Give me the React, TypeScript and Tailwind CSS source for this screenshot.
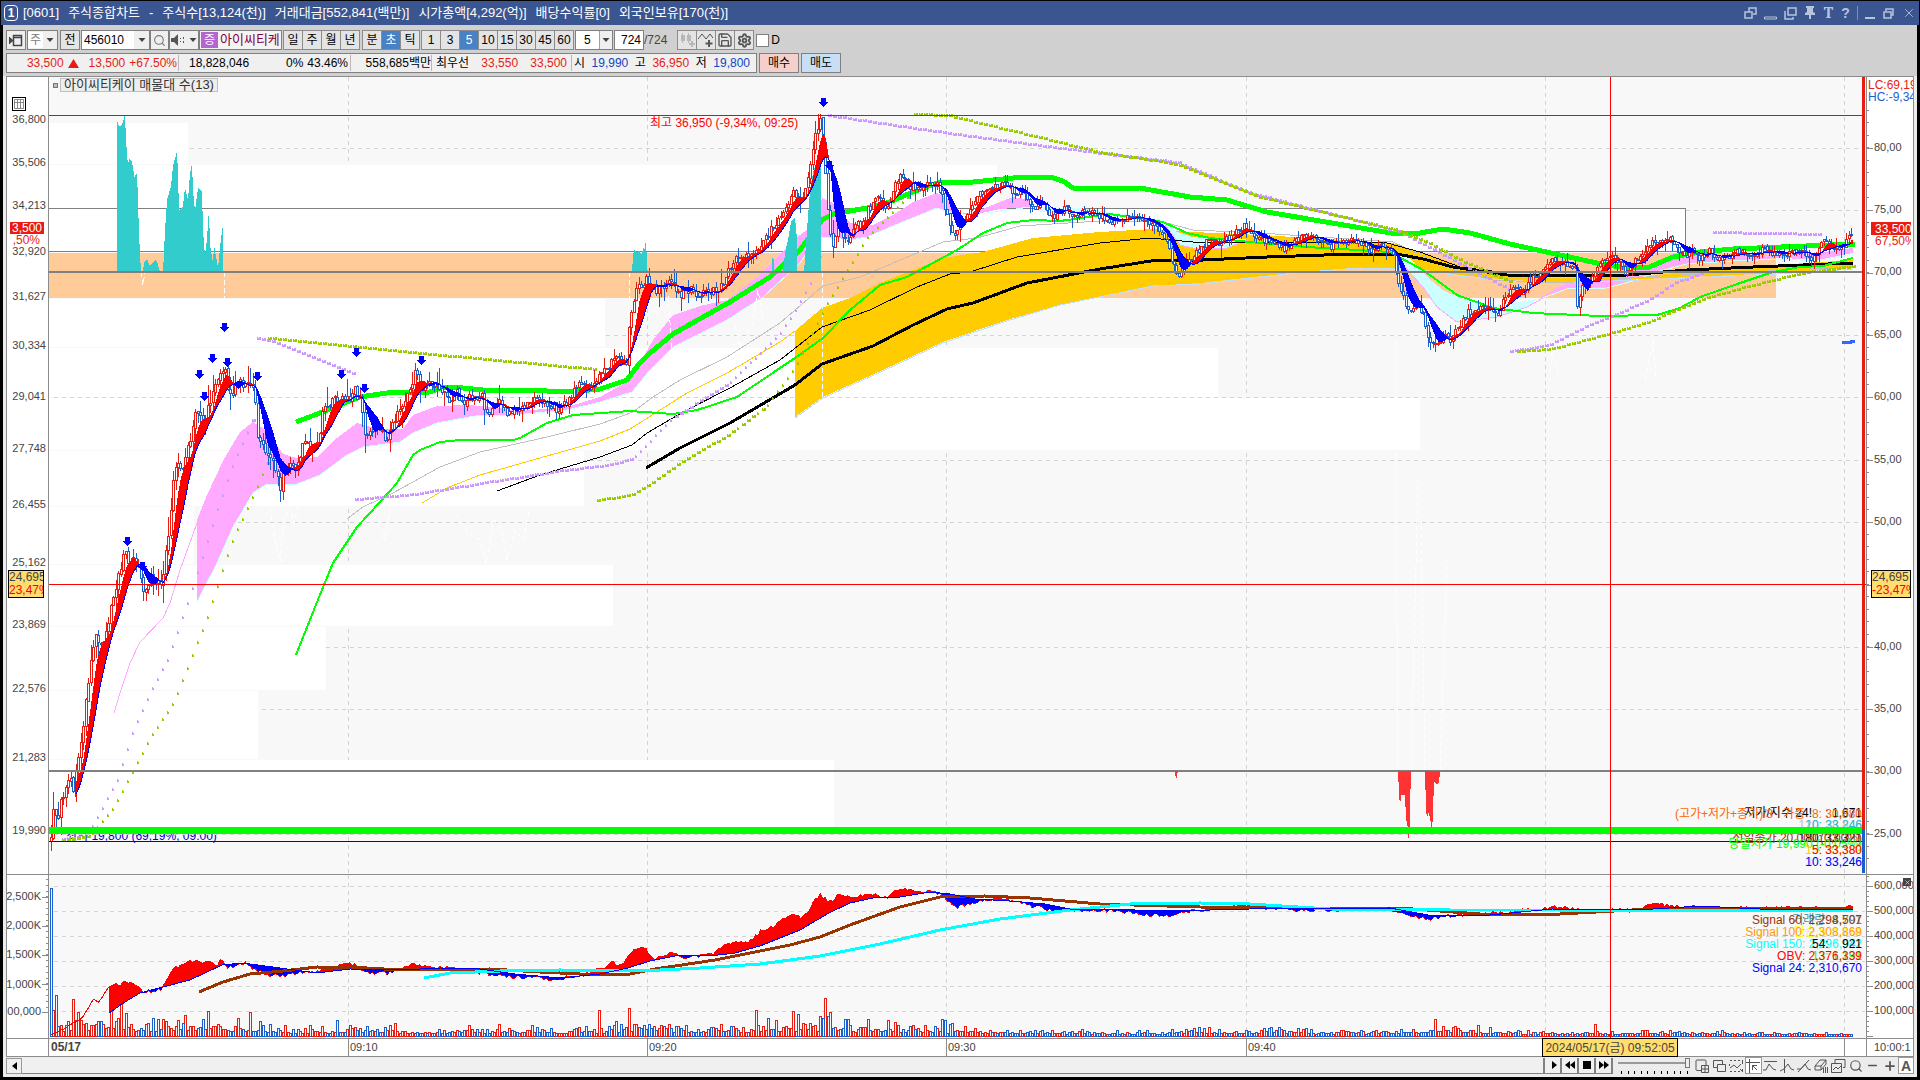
import React from 'react';
import { Minus, Plus, Search, Settings, Save, X } from 'lucide-react';

type Pt = [number, number];

const parse = (s: string): Pt[] => s.trim().split(/\s+/).map((p) => p.split(',').map(Number) as Pt);

const valueAt = (pts: Pt[], x: number) => {
  if (x <= pts[0][0]) return pts[0][1];
  for (let i = 1; i < pts.length; i++) {
    if (x <= pts[i][0]) {
      const [x0, y0] = pts[i - 1];
      const [x1, y1] = pts[i];
      return y0 + ((y1 - y0) * (x - x0)) / (x1 - x0 || 1);
    }
  }
  return pts[pts.length - 1][1];
};

const makeRandom = (seed: number) => () => {
  seed = (seed * 1664525 + 1013904223) % 4294967296;
  return seed / 4294967296;
};

const PRICE = parse(`50,840 52,833 54,802 58,820 62,800 67,780 71,772 73,788 76,768 79,755 82,736 87,693 91,660 95,628 98,640 101,648 104,636 108,618 112,600 115,587
120,570 125,553 128,559 133,561 138,570 143,590 147,581 153,581 163,580 166,545 170,516 173,484 178,458 182,476 185,463 190,438 195,415 200,420 205,427 208,402 213,395
218,384 223,366 225,362 228,391 233,391 238,384 247,384 253,388 256,413 258,445 263,441 267,456 273,463 280,489 283,474 290,463 297,466 302,445 308,438 313,450
318,441 322,413 328,409 335,398 343,398 350,398 355,388 360,398 365,431 372,427 378,422 386,437 393,423 398,410 405,397 410,387 415,371 422,390 428,383 442,390
447,400 457,393 465,403 473,395 482,397 487,415 493,407 502,400 508,413 513,410 523,408 533,400 545,400 557,408 565,403 573,390 580,383 588,388 597,378
607,367 615,358 622,363 627,361 629,325 632,303 637,290 647,279 657,291 670,279 675,287 680,293 690,290 703,293 717,290 725,280 730,267 737,257 750,255 758,248
763,237 770,231 777,220 783,211 793,193 800,200 805,193 810,167 815,138 821,118 824,157 829,223 832,244 838,225 848,245 855,227 863,223 868,210 877,200
885,206 890,206 895,185 902,175 908,186 920,187 927,179 938,183 943,200 950,223 956,241 960,223 970,213 980,193 992,190 1000,183 1013,190 1027,197 1033,210
1043,200 1053,219 1065,207 1074,217 1087,210 1100,216 1118,223 1127,215 1140,220 1153,225 1167,240 1172,263 1179,276 1187,260 1197,252 1207,242 1220,242 1233,235
1244,226 1257,238 1273,240 1283,248 1293,242 1307,235 1320,242 1330,247 1343,240 1360,243 1370,251 1380,245 1393,250 1396,277 1403,297 1410,313 1417,303
1423,313 1428,335 1433,345 1440,340 1447,332 1451,341 1458,327 1467,313 1483,307 1497,314 1503,300 1517,283 1522,294 1533,277 1543,270 1553,261 1560,260 1575,267
1577,305 1582,287 1590,280 1600,263 1610,257 1622,262 1625,272 1633,260 1643,253 1653,240 1660,243 1667,238 1677,245 1684,258 1692,250 1700,257 1710,251 1716,261
1727,257 1737,250 1750,258 1763,249 1782,255 1797,250 1812,258 1823,242 1838,248 1847,240 1853,230`);

const STEP = 2.49;

// one entry for each five-second bar, in plot units
const buildCandles = () => {
  const rand = makeRandom(724);
  const out: { x: number; open: number; close: number; high: number; low: number }[] = [];
  let open = 841;
  for (let i = 0; i < 724; i++) {
    const x = 51 + i * STEP;
    const size = x < 420 ? 12 : x < 1000 ? 9 : 7;
    const close = valueAt(PRICE, x) + (rand() - 0.5) * size;
    out.push({
      x,
      open,
      close,
      high: Math.min(open, close) - rand() * rand() * size * 1.8,
      low: Math.max(open, close) + rand() * rand() * size * 1.8,
    });
    open = close + (rand() - 0.5) * 2;
  }
  return out;
};

const CANDLES = buildCandles();

const candlePath = (up: boolean) =>
  CANDLES.filter((c) => (up ? c.close <= c.open : c.close > c.open))
    .map((c) => {
      const x = Math.round(c.x) + 0.5;
      const top = Math.round(Math.min(c.open, c.close)) + 0.5;
      const h = Math.max(1, Math.round(Math.abs(c.open - c.close)));
      return `M${x} ${Math.round(c.high)}V${top}M${x} ${top + h}V${Math.round(c.low) + 1}M${x - 1} ${top}h2v${h}h-2z`;
    })
    .join('');

const average = (n: number): Pt[] =>
  CANDLES.map((c, i) => {
    const part = CANDLES.slice(Math.max(0, i - n + 1), i + 1);
    return [c.x, part.reduce((a, b) => a + b.close, 0) / part.length] as Pt;
  });

const MA5 = average(5);
const MA10 = average(10);

// area between two lines, only where the first lies over (or under) the second
const between = (a: Pt[], b: Pt[], over: boolean, from: number, to: number) => {
  let d = '';
  for (let x = from; x < to; x++) {
    const ya = valueAt(a, x);
    const yb = valueAt(b, x);
    if (over ? ya < yb : ya > yb) d += `M${x + 0.5} ${ya.toFixed(1)}V${yb.toFixed(1)}`;
  }
  return d;
};

const markers = (s: string) => {
  const pts = parse(s);
  let d = '';
  for (let x = pts[0][0]; x <= pts[pts.length - 1][0]; x += 5) {
    const y = Math.round(valueAt(pts, x));
    const steep = Math.abs(valueAt(pts, x + 5) - y) > 4;
    d += steep ? `M${x} ${y}h2v2h-2zM${x} ${y - 1}h1v1h-1z` : `M${x} ${y}h4v2h-4zM${x} ${y - 1}h1v1h-1zM${x + 2} ${y - 1}h2v1h-2z`;
  }
  return d;
};

const line = (pts: Pt[]) => pts.map((p) => `${p[0].toFixed(1)},${p[1].toFixed(1)}`).join(' ');

const BANDS: { y: number; h: number; to: number }[] = [
  { y: 123, h: 41, to: 188 },
  { y: 165, h: 43, to: 997 },
  { y: 299, h: 48, to: 605 },
  { y: 348, h: 49, to: 1218 },
  { y: 398, h: 52, to: 1420 },
  { y: 451, h: 55, to: 584 },
  { y: 507, h: 57, to: 194 },
  { y: 565, h: 61, to: 613 },
  { y: 627, h: 63, to: 326 },
  { y: 691, h: 68, to: 258 },
  { y: 760, h: 73, to: 834 },
];

const GRID_X = [348, 647, 946, 1246, 1545, 1844];
const GRID_Y = [148, 210, 335, 397, 460, 522, 584, 647, 709, 834];

const TEAL = [
  '117,272 117,121 119,126 122,125 124,119 124,113 125,116 126,140 128,167 129,158 132,162 134,174 134,178 137,173 138,200 139,234 141,272',
  '143,272 144,263 147,259 150,266 155,260 157,261 160,272',
  '163,272 165,231 167,200 171,186 173,166 177,151 178,174 179,211 183,206 185,188 188,200 190,174 192,163 193,191 195,211 198,188 202,191 203,230 205,257 207,238 209,209 210,245 213,263 214,245 218,268 221,238 223,225 223,272',
  '632,272 633,257 634,249 637,253 639,250 642,255 643,247 645,250 646,236 647,267 648,272',
  '772,272 773,245 774,272',
  '783,272 785,253 788,240 791,222 793,219 795,217 797,240 797,272',
  '804,272 807,230 810,190 813,173 818,157 821,150 821,272',
];

const RED_DROPS = [
  '1398,771 1399,792 1400,807 1401,795 1405,795 1406,818 1408,828 1409,848 1410,808 1411,771',
  '1425,771 1426,807 1427,820 1428,812 1430,817 1432,834 1433,810 1434,782 1437,784 1439,783 1440,771',
  '1175,771 1176,780 1177,776 1178,771',
];

const PINK = [
  `197,520 207,495 223,461 240,432 253,422 267,431 283,454 300,459 317,457 333,441 357,423 377,429 403,429 413,415 437,406 467,405 493,407 520,411 567,407 600,397 627,382
  640,363 653,340 673,315 700,306 727,300 757,277 797,237 817,223 822,198 833,203 850,223 873,225 893,215 913,202 937,193 947,198 960,213 973,213 1000,202 1013,197 1030,200
  1030,207 1000,209 973,215 953,213 937,208 900,223 867,237 850,240 822,237 813,243 800,263 763,297 727,320 673,347 650,370 632,392 600,402 567,410 513,415 480,415 437,423 413,433
  400,442 363,447 347,455 320,475 297,484 267,484 253,493 233,527 217,563 197,602`,
  `1540,297 1567,283 1610,278 1643,268 1673,254 1700,254 1733,255 1783,255 1817,253 1853,248 1853,253 1817,260 1783,258 1733,260 1687,263 1660,270 1633,280 1607,287 1567,288 1540,298`,
];
const PINK_EDGES = [
  '1030,207 973,215 953,213 937,208 900,223 867,237 850,240 822,237 813,243 800,263 763,297 727,320 673,347 650,370 632,392 600,402 567,410 513,415 480,415 437,423 413,433 400,442 363,447 347,455 320,475 297,484 267,484 253,493 233,527 217,563 197,602',
  '1853,254 1817,261 1783,259 1733,261 1687,264 1660,271 1633,281 1607,288 1567,289 1540,299',
];
const ICE = [
  '1040,207 1080,208 1110,212 1163,220 1177,232 1193,237 1220,240 1247,239 1227,248 1193,248 1180,245 1165,225 1110,216 1040,212',
  '1393,250 1410,258 1427,277 1443,290 1460,298 1493,305 1520,302 1537,299 1527,307 1497,317 1457,322 1437,307 1423,287 1410,273 1397,257',
];
const GOLD = `795,331 822,308 850,298 880,283 943,258 983,252 1033,238 1100,232 1153,229 1193,232 1260,235 1393,243 1427,255 1460,265 1493,273 1540,278 1643,277 1700,270 1853,260
1853,268 1777,273 1667,278 1560,282 1510,280 1460,275 1413,268 1360,268 1293,273 1253,277 1200,283 1153,286 1060,305 1007,320 943,342 883,370 823,397 795,417`;
const GOLD_EDGE = '1853,269 1777,274 1667,279 1560,283 1510,281 1460,276 1413,269 1360,268 1293,273 1253,278 1200,284 1153,286 1060,305 1007,321 943,343 883,371 823,398 795,418';

const AVERAGES: { color: string; width: number; pts: string }[] = [
  { color: '#ffaaff', width: 1, pts: '114,713 120,693 130,663 140,642 163,618 170,603 180,570 197,523' },
  {
    color: '#c0c0c0',
    width: 1,
    pts: '347,519 363,507 393,493 440,467 480,452 547,437 600,424 633,412 653,397 680,380 727,357 780,323 823,286 860,277 943,242 977,238 1020,226 1100,221 1163,222 1193,230 1260,233 1393,242 1453,270 1493,280 1560,283 1660,276 1853,267',
  },
  { color: '#ffcc00', width: 1, pts: '422,503 447,488 480,475 547,456 600,441 630,429 657,412 687,393 727,373 780,342 795,331' },
  {
    color: '#000000',
    width: 1,
    pts: '497,491 540,475 600,457 632,445 647,433 683,412 730,388 780,360 822,327 870,310 917,287 950,274 970,272 1017,257 1100,243 1150,238 1193,242 1387,243 1420,252 1460,267 1500,272',
  },
  {
    color: '#000000',
    width: 3,
    pts: '646,468 680,448 730,423 795,385 822,364 873,346 913,325 947,309 973,303 1027,283 1100,269 1157,260 1203,260 1267,257 1353,254 1397,254 1423,259 1453,267 1507,275 1560,276 1627,275 1687,270 1753,267 1853,263',
  },
  {
    color: '#00ff00',
    width: 2,
    pts: '296,655 317,602 333,563 357,527 380,502 397,483 413,455 420,450 440,442 460,440 513,440 520,438 547,423 573,415 630,411 673,414 697,410 737,397 780,368 795,358 823,338 850,310 880,285 907,277 957,250 983,233 1007,223 1033,220 1060,221 1110,214 1163,222 1187,233 1210,238 1260,243 1307,247 1390,252 1423,270 1457,295 1493,308 1533,313 1600,316 1657,315 1680,308 1700,297 1740,283 1773,272 1800,267 1823,266 1853,258',
  },
  {
    color: '#00ff00',
    width: 5,
    pts: '296,422 320,413 347,402 360,397 387,393 430,392 443,387 463,388 493,391 527,390 567,392 600,389 627,380 638,365 650,353 673,334 703,317 730,302 770,277 800,250 822,220 833,214 867,208 887,203 913,192 937,183 973,182 1023,177 1050,177 1063,181 1073,188 1100,189 1140,188 1190,197 1227,200 1267,212 1320,221 1373,230 1397,234 1420,233 1443,229 1470,233 1510,244 1560,255 1597,263 1620,267 1647,268 1673,257 1700,252 1733,249 1855,244',
  },
];

const PURPLE_DOTS = [
  '62,839 88,836 92,826 117,780 133,730 150,692 168,658 187,603 200,563 217,509 233,463 253,418',
  '257,338 273,341 355,374',
  '355,499 413,494 493,481 563,470 613,464 633,458 673,417 730,382 780,333 795,310 813,277 823,247',
  '828,115 913,128 1000,140 1100,153 1177,162 1247,192 1400,232 1453,260 1510,290',
  '1510,351 1547,345 1583,327 1610,316 1647,300 1673,283 1700,273',
  '1713,232 1820,234',
];
const OLIVE_DOTS = [
  '62,840 90,836 97,827 113,808 133,770 150,737 173,703 190,660 207,617 223,567 233,538 253,495 267,463',
  '268,338 420,353 595,369',
  '597,500 630,495 647,485 680,462 730,433 767,405 795,367 827,303 847,270 867,237 907,197',
  '914,114 947,115 1100,152 1177,164 1260,197 1397,230 1427,242 1460,260 1513,283',
  '1517,351 1550,349 1610,333 1650,321 1667,313 1707,297 1747,286 1800,273 1853,266',
];

const GHOSTS = [
  '141,272 143,285 145,272', '224,272 224,298', '270,507 275,540 280,562 284,520 290,507 294,524 298,507',
  '370,507 378,522 385,540 390,507', '452,507 466,530 480,540 486,564 494,520 502,530 507,560 515,530 523,540 530,507',
  '630,272 628,330', '650,300 657,315 668,295 672,350', '735,325 740,348 752,325 758,290 764,325', '822,272 822,397',
  '1395,340 1398,771', '1411,771 1418,480', '1425,771 1421,520', '1440,771 1447,560', '1550,380 1552,352 1558,375', '1645,380 1653,340 1656,378',
];

const ARROWS = parse('127,541 142,566 199,374 204,396 212,358 224,327 227,362 257,376 341,374 356,352 364,388 421,360 823,102 829,165');

const PricePlot: React.FC = () => (
  <svg viewBox="49 77 1817 797" preserveAspectRatio="none" shapeRendering="crispEdges" className="absolute inset-0 h-full w-full" aria-hidden="true">
    <g stroke="#d3d3d3" strokeDasharray="4 4">
      {GRID_X.map((x) => <line key={x} x1={x + 0.5} x2={x + 0.5} y1="77" y2="874" />)}
      {GRID_Y.map((y) => <line key={y} x1="54" x2="1862" y1={y + 0.5} y2={y + 0.5} />)}
    </g>
    {BANDS.map((b) => <rect key={b.y} x="49" y={b.y} width={b.to - 49} height={b.h} fill="#fff" />)}
    <rect x="48.5" y="208.5" width="1637" height="43" fill="#fff" stroke="#808080" />
    <rect x="49" y="253" width="1727" height="45" fill="#ffcc99" />
    <line x1="54" x2="1420" y1="397.5" y2="397.5" stroke="#d3d3d3" strokeDasharray="4 4" />

    {PINK.map((p) => <polygon key={p} points={p} fill="#ffaaff" />)}
    <g fill="none" stroke="#ccffff">
      {PINK_EDGES.map((p) => <polyline key={p} points={p} />)}
    </g>
    <polygon points={GOLD} fill="#ffcc00" />
    <polyline points={GOLD_EDGE} fill="none" stroke="#c0e0ff" />
    {ICE.map((p) => <polygon key={p} points={p} fill="#ccffff" />)}
    <polyline points="1397,257 1410,273 1423,287 1437,307 1457,322 1497,317 1527,307 1543,298" fill="none" stroke="#ffaaff" />
    <polyline points="1165,225 1180,245 1193,248 1227,248 1247,240" fill="none" stroke="#ffaaff" />
    {GHOSTS.map((p) => <polyline key={p} points={p} fill="none" stroke="#fff" strokeDasharray="5 3" />)}

    {AVERAGES.map((a) => (
      <polyline key={a.pts} points={a.pts} fill="none" stroke={a.color} strokeWidth={a.width} strokeLinejoin="round" />
    ))}
    {PURPLE_DOTS.map((p) => <path key={p} d={markers(p)} fill="#cc99ff" />)}
    {OLIVE_DOTS.map((p) => <path key={p} d={markers(p)} fill="#99cc00" />)}
    {TEAL.map((p) => <polygon key={p} points={p} fill="#33cccc" />)}

    <path d={candlePath(true)} fill="#fff" stroke="#e81c10" />
    <path d={candlePath(false)} fill="#fff" stroke="#1a5fcc" />
    <path d={between(MA5, MA10, true, 75, 1853)} stroke="#ff0000" />
    <path d={between(MA5, MA10, false, 75, 1853)} stroke="#0000ff" />
    <polyline points={line(MA10.slice(10))} fill="none" stroke="#0000ff" />

    <rect x="49" y="271" width="1813" height="2" fill="#808080" />
    <rect x="49" y="770" width="1813" height="2" fill="#808080" />
    {RED_DROPS.map((p) => <polygon key={p} points={p} fill="#ff3333" />)}
    <path d="M1842 341h8v-1h5v3h-3v1h-10z" fill="#3366ff" />
    {ARROWS.map(([x, y]) => (
      <path key={`${x}-${y}`} d={`M${x - 2} ${y - 4}h5v4h2l-4.500 5l-4.500 -5h2z`} fill="#0000ff" />
    ))}
    <rect x="49" y="115" width="1813" height="1" fill="#ff0000" />
    <rect x="49" y="841" width="1813" height="1" fill="#0000cc" />
    <rect x="1862" y="77" width="3" height="752" fill="#e81c10" />
    <rect x="1862" y="829" width="3" height="44" fill="#1a5fcc" />
  </svg>
);

const OBV_BASE = parse(`52,1035 67,1027 83,1017 94,998 98,1003 108,988 115,982 119,987 125,981 130,983 137,987 143,992 162,989 167,980 172,970 177,967 187,962 197,960 202,965 210,961 217,965
222,958 227,967 245,963 257,970 267,974 279,976 293,973 310,972 333,967 354,964 365,973 387,973 400,969 414,964 427,967 467,970 489,974 507,976 529,977 556,979 579,976 596,971
612,963 623,966 630,953 637,947 646,949 654,960 670,953 686,958 712,954 733,941 744,943 753,940 761,931 773,926 795,913 800,918 806,914 820,894 829,903 840,893 849,897
873,894 887,897 900,889 922,891 940,894 955,907 971,903 998,897 1021,903 1034,907 1056,910 1100,910 1169,916 1190,911 1245,906 1300,910 1390,909 1397,913 1409,916
1428,919 1452,915 1504,913 1552,907 1587,911 1638,910 1654,903 1676,907 1724,909 1793,908 1841,908 1853,904`);
const OBV_SIGNAL = parse(`109,1013 125,1002 140,993 163,987 190,980 222,965 243,963 280,968 317,973 350,969 400,970 440,968 480,969 515,974 560,978 600,974 628,968 650,961 680,955 710,956 735,953
760,946 800,930 829,913 850,903 873,898 900,897 930,892 950,894 975,899 1010,901 1045,904 1070,909 1100,909 1170,911 1250,909 1390,908 1428,915 1480,916 1552,909
1638,910 1700,906 1760,909 1853,909`);
const VOLUME_SHAPE = parse(`54,20 70,22 95,26 119,24 140,15 170,20 225,20 260,14 300,9 320,10 355,16 400,9 460,10 600,10 635,20 700,12 730,16 824,20 850,16 945,12 1000,8 1100,6 1160,5
1175,10 1380,5 1430,12 1500,6 1620,4 1640,6 1700,4 1853,3`);
const SPIKES: Record<number, number> = { 1: 25, 2: 40, 9: 36, 28: 34, 80: 23, 220: 25, 232: 27, 283: 25, 298: 24, 311: 37, 313: 23, 358: 16, 556: 16, 620: 11 };

const obvSeries = () => {
  const rand = makeRandom(31);
  return CANDLES.map((c) => [c.x, valueAt(OBV_BASE, c.x) + (rand() - 0.5) * (c.x < 110 ? 1 : 4)] as Pt);
};
const OBV = obvSeries();

const volumePath = (up: boolean) => {
  const rand = makeRandom(99);
  let d = '';
  CANDLES.forEach((c, i) => {
    const h = Math.round(SPIKES[i] ?? valueAt(VOLUME_SHAPE, c.x) * (0.2 + rand() * rand() * 1.1)) + 1;
    const isUp = i > 0 && (c.close <= c.open || SPIKES[i] !== undefined);
    if (isUp === up) d += `M${Math.round(c.x) - 0.5} 1036.500h2v${i === 0 ? -148 : -h}h-2z`;
  });
  return d;
};

const ObvPlot: React.FC = () => (
  <svg viewBox="49 875 1817 163" preserveAspectRatio="none" shapeRendering="crispEdges" className="absolute inset-0 h-full w-full" aria-hidden="true">
    <g stroke="#d3d3d3" strokeDasharray="4 4">
      {GRID_X.map((x) => <line key={x} x1={x + 0.5} x2={x + 0.5} y1="875" y2="1038" />)}
      {[886, 911, 936, 961, 986, 1011].map((y) => <line key={y} x1="54" x2="1865" y1={y + 0.5} y2={y + 0.5} />)}
    </g>
    <path d={volumePath(true)} fill="#f8f8f8" stroke="#e81c10" />
    <path d={volumePath(false)} fill="#f8f8f8" stroke="#1a5fcc" />
    <polyline points={line(OBV)} fill="none" stroke="#ff0000" />
    <path d={between(OBV, OBV_SIGNAL, true, 109, 1853)} stroke="#ff0000" />
    <path d={between(OBV, OBV_SIGNAL, false, 109, 1853)} stroke="#0000ff" />
    <polyline
      points="199,992 223,982 250,974 283,971 317,967 367,968 400,970 490,969 540,972 600,975 630,974 655,969 715,960 790,945 820,937 850,925 900,907 940,897 985,896 1030,898 1100,904 1200,907 1300,908 1400,908 1480,914 1560,914 1650,909 1853,908"
      fill="none" stroke="#993300" strokeWidth="3"
    />
    <polyline
      points="424,978 450,973 500,971 560,970 640,971 700,968 760,964 820,956 880,944 940,930 1000,919 1070,910 1130,904 1200,903 1250,904 1330,909 1450,910 1560,910 1853,911"
      fill="none" stroke="#00ffff" strokeWidth="3"
    />
    <polyline points={line(OBV_SIGNAL)} fill="none" stroke="#0000ff" />
  </svg>
);

const top = (y: number, from: number, height: number) => ({ top: `${((y - from) / height) * 100}%` });
const left = (x: number) => ({ left: `${((x - 49) / 1817) * 100}%` });

const LEFT_PRICES: [string, number][] = [
  ['36,800', 119], ['35,506', 162], ['34,213', 205], ['32,920', 251], ['31,627', 296], ['30,334', 345], ['29,041', 396],
  ['27,748', 448], ['26,455', 504], ['25,162', 562], ['23,869', 624], ['22,576', 688], ['21,283', 757], ['19,990', 830],
];
const RIGHT_PRICES: [string, number][] = [
  ['80,00', 147], ['75,00', 209], ['70,00', 271], ['65,00', 334], ['60,00', 396], ['55,00', 459],
  ['50,00', 521], ['40,00', 646], ['35,00', 708], ['30,00', 770], ['25,00', 833],
];

const SUMMARY: { text: string; y: number; className: string }[] = [
  { text: '저가/지수 24!    : 1,671', y: 813, className: 'text-black' },
  { text: '(고가+저가+종가)/3   가중  8: 30,880', y: 814, className: 'text-[#ff6600]' },
  { text: '120: 28,846', y: 825, className: 'text-[#c0c0c0]' },
  { text: '10: 33,246', y: 825, className: 'text-[#22bbdd]' },
  { text: '180: 33,321', y: 838, className: 'text-black' },
  { text: '전일종가 20,000 (0,00%)', y: 838, className: 'text-[#993300]' },
  { text: '당일시가 19,990 (-0,05%)', y: 844, className: 'text-[#00ff00]' },
  { text: '15: 33,380', y: 850, className: 'text-[#ffcc00]' },
  { text: '5: 33,380', y: 850, className: 'text-[#ff0000]' },
  { text: '30: 33,246', y: 862, className: 'text-[#c0e0ff]' },
  { text: '10: 33,246', y: 862, className: 'text-[#0000ff]' },
];

const OBV_SUMMARY: { text: string; y: number; className: string }[] = [
  { text: '거래량: 4,791', y: 920, className: 'text-[#339999]' },
  { text: 'Signal 60: 2,298,507', y: 920, className: 'text-[#993300]' },
  { text: '단순 5: 1,114', y: 932, className: 'text-[#ffff00]' },
  { text: 'Signal 100: 2,308,869', y: 932, className: 'text-[#ff9900]' },
  { text: 'Signal 150: 2,296,942', y: 944, className: 'text-[#00ffff]' },
  { text: '54:    921', y: 944, className: 'text-black' },
  { text: '13: 1,191', y: 956, className: 'text-[#00ff00]' },
  { text: 'OBV: 2,376,339', y: 956, className: 'text-[#ff0000]' },
  { text: 'Signal 24: 2,310,670', y: 968, className: 'text-[#0000ff]' },
];

const TIMES: [string, number][] = [['09:10', 348], ['09:20', 647], ['09:30', 946], ['09:40', 1246], ['', 1844]];

const Arrow: React.FC = () => (
  <svg viewBox="0 0 7 4" className="h-1 w-2" aria-hidden="true"><path d="M0 0h7L3.500 4z" fill="#444" /></svg>
);

const box = 'flex h-5 shrink-0 items-center justify-center border border-[#808080]';
const key = 'flex h-5 shrink-0 items-center justify-center border border-[#8c8c8c] bg-[#e4e4e4] -mr-px';

const TitleBar: React.FC = () => (
  <header className="mx-px mt-px flex h-6 shrink-0 items-center justify-between bg-[#3a5590] pr-[3px] pl-[3px] text-white">
    <div className="flex items-center gap-[5px]">
      <span className="flex h-4 w-[14px] items-center justify-center rounded-sm border border-white text-xs font-bold">1</span>
      <h1 className="flex gap-[9px] text-[13px] whitespace-nowrap">
        <span>[0601]</span>
        <span>주식종합차트</span>
        <span>-</span>
        <span>주식수[13,124(천)]</span>
        <span>거래대금[552,841(백만)]</span>
        <span>시가총액[4,292(억)]</span>
        <span>배당수익률[0]</span>
        <span>외국인보유[170(천)]</span>
      </h1>
    </div>
    <div className="flex items-center gap-[7px] text-[#b8c4dc]">
      <button aria-label="분리"><svg width="13" height="13" fill="none" stroke="currentColor" strokeWidth="1.500"><path d="M5 4.500V1h7v6H9M1 5h7v6H1z" /></svg></button>
      <button aria-label="내리기"><svg width="13" height="13" fill="none" stroke="currentColor"><path d="M.5 10h12v2H.5z" /></svg></button>
      <button aria-label="복제"><svg width="13" height="13" fill="none" stroke="currentColor" strokeWidth="1.500"><path d="M4 1h8v7H4zM1 4v8h8v-2" /></svg></button>
      <button aria-label="고정"><svg width="12" height="14" fill="currentColor"><path d="M2 0h8v2H9v4l2 1v2H7v4H5V9H1V7l2-1V2H2z" /></svg></button>
      <button aria-label="글꼴" className="w-[11px] font-serif text-base leading-4 font-bold">T</button>
      <button aria-label="도움말" className="w-[9px] text-sm leading-4 font-bold">?</button>
      <span className="h-[14px] w-px bg-[#8090b0]" />
      <button aria-label="최소화"><svg width="11" height="13"><path d="M0 10h10v2H0z" fill="currentColor" /></svg></button>
      <button aria-label="이전 크기"><svg width="12" height="13" fill="none" stroke="currentColor" strokeWidth="1.500"><path d="M3 4V2h7v6H8M1 5h7v6H1z" /></svg></button>
      <button aria-label="닫기"><X size={14} strokeWidth={1.5} /></button>
    </div>
  </header>
);

const Toolbar: React.FC = () => (
  <div className="flex items-center pt-[5px] pl-[3px] text-xs">
    <button className={`${box} w-5 bg-[#efefef]`} aria-label="목록 펼치기">
      <svg width="14" height="13" fill="none" stroke="#444"><path d="M4.500 1.500h8v10h-8zM4.500 3.500h8" strokeWidth="1.500" /><path d="M0 3l4 3.500L0 10z" fill="#444" /></svg>
    </button>
    <button className={`${box} ml-px w-[31px] justify-between bg-[#efefef]`} aria-label="주식 구분">
      <span className="flex-1 bg-white text-[#808080]">주</span><span className="px-[3px]"><Arrow /></span>
    </button>
    <button className={`${box} ml-0.5 w-5 bg-[#e4e4e4]`}>전</button>
    <label className={`${box} ml-px w-[69px] bg-white`}>
      <input aria-label="종목코드" defaultValue="456010" className="w-[52px] pl-0.5 outline-none" />
      <span className="flex h-full flex-1 items-center justify-center bg-[#efefef]"><Arrow /></span>
    </label>
    <button className={`${box} w-[19px] bg-[#efefef]`} aria-label="종목 검색"><Search size={13} color="#777" /></button>
    <button className={`${box} w-[30px] gap-1 bg-[#efefef]`} aria-label="소리">
      <svg width="14" height="12" fill="#555"><path d="M0 4h3l4-4v12L3 8H0zM9 4h1v1H9zM9 7h1v1H9zM12 3h1v2h-1zM12 7h1v2h-1z" /></svg><Arrow />
    </button>
    <div className={`${box} relative w-[83px] justify-start overflow-hidden bg-[#f4f4f4]`}>
      <span className="mx-px flex h-4 w-[17px] shrink-0 items-center justify-center bg-[#b366d0] text-white">증</span>
      <span className="ml-px text-[13px] whitespace-nowrap text-[#800040]">아이씨티케</span>
    </div>
    <div className="ml-px flex">
      {['일', '주', '월', '년'].map((t) => <button key={t} className={`${key} w-5`}>{t}</button>)}
    </div>
    <div className="ml-[3px] flex">
      {['분', '초', '틱'].map((t) => (
        <button key={t} aria-pressed={t === '초'} className={t === '초' ? `${key} w-5 bg-[#4a80c4]! text-white` : `${key} w-5`}>{t}</button>
      ))}
    </div>
    <div className="ml-0.5 flex">
      {['1', '3', '5', '10', '15', '30', '45', '60'].map((t) => (
        <button key={t} aria-pressed={t === '5'} className={t === '5' ? `${key} w-5 bg-[#4a80c4]! text-white` : `${key} w-5`}>{t}</button>
      ))}
    </div>
    <div className={`${box} relative ml-0.5 w-[38px] bg-white`}>
      <select aria-label="주기" className="h-full w-full appearance-none pl-2 outline-none"><option>5</option></select>
      <span className="pointer-events-none absolute inset-y-0 right-0 flex w-[13px] items-center justify-center border-l border-[#a0a0a0] bg-[#efefef]"><Arrow /></span>
    </div>
    <label className="ml-px flex items-center text-[#444]">
      <input aria-label="조회 봉수" defaultValue="724" className={`${box} w-[30px] bg-white pr-0.5 text-right text-black outline-none`} />
      <span>/724</span>
    </label>
    <div className="ml-[10px] flex">
      <button className={`${key} w-5`} aria-label="봉 추가">
        <svg width="15" height="14" fill="#b8b8b8"><path d="M1 2h4v6H1zM7 2h4v6H7zM2 0h1v10H2zM8 0h1v10H8zM11 8h2v2h2v2h-2v2h-2v-2H9v-2h2z" /></svg>
      </button>
      <button className={`${key} w-5`} aria-label="지표 추가">
        <svg width="16" height="14" fill="none" stroke="#555"><path d="M0 6l4-5 4 5 4-5 3 4" /><path d="M11 7v7M7.500 10.500h7" strokeWidth="2" /></svg>
      </button>
      <button className={`${key} w-5`} aria-label="저장"><Save size={16} color="#555" strokeWidth={2} /></button>
      <button className={`${key} w-5`} aria-label="설정"><Settings size={15} color="#555" strokeWidth={3} /></button>
    </div>
    <label className="ml-[3px] flex items-center gap-0.5">
      <input type="checkbox" className="h-[13px] w-[13px] appearance-none border border-[#808080] bg-white" />D
    </label>
  </div>
);

const QuoteBar: React.FC = () => (
  <div className="mt-[3px] flex items-center gap-0.5 pl-[3px] text-xs whitespace-nowrap">
    <div className="flex h-5 w-[751px] items-center border border-[#808080] bg-[#f0f0f0]">
      <div className="flex h-4 w-[172px] items-center justify-end border-r border-[#b8b8b8] pr-px text-[#e81c10]">
        <span>33,500</span>
        <svg width="11" height="9" className="mr-2.5 ml-1"><path d="M5.500 0L11 9H0z" fill="#e81c10" /></svg>
        <span className="mr-1">13,500</span>
        <span>+67.50%</span>
      </div>
      <div className="flex h-4 w-[172px] items-center border-r border-[#b8b8b8] pr-0.5 pl-2.5">
        <span className="flex-1">18,828,046</span>
        <span className="mr-1">0%</span>
        <span>43.46%</span>
      </div>
      <div className="flex h-4 w-[81px] items-center justify-end border-r border-[#b8b8b8]">558,685백만</div>
      <div className="flex h-4 w-[140px] items-center justify-between border-r border-[#b8b8b8] px-1">
        <span>최우선</span>
        <span className="text-[#e81c10]">33,550</span>
        <span className="text-[#e81c10]">33,500</span>
      </div>
      <div className="flex flex-1 items-center justify-between pr-1.5 pl-0.5">
        <span>시</span><span className="text-[#1045c0]">19,990</span>
        <span>고</span><span className="text-[#e81c10]">36,950</span>
        <span>저</span><span className="text-[#1045c0]">19,800</span>
      </div>
    </div>
    <button className={`${box} w-10 bg-[#f5d0cb]`}>매수</button>
    <button className={`${box} w-10 bg-[#c8def4]`}>매도</button>
  </div>
);

const Ticks: React.FC<{ values: number[]; minor: number[]; from: number; height: number; side: 'left' | 'right' }> = ({ values, minor, from, height, side }) => (
  <svg
    viewBox={`0 ${from} 6 ${height}`}
    preserveAspectRatio="none"
    shapeRendering="crispEdges"
    className={side === 'left' ? 'absolute top-0 left-0 h-full w-1.5' : 'absolute top-0 right-0 h-full w-1.5'}
    aria-hidden="true"
  >
    {values.map((y) => <rect key={y} x="0" y={y} width="6" height="1" fill="#8c8c8c" />)}
    {minor.map((y) => <rect key={y} x={side === 'left' ? 0 : 4} y={y} width="2" height="1" fill="#8c8c8c" />)}
  </svg>
);

const range = (start: number, end: number, step: number) => {
  const out: number[] = [];
  for (let y = start; y <= end; y += step) out.push(Math.round(y));
  return out;
};

const PriceRow: React.FC = () => (
  <div className="flex min-h-0 flex-[797_1_0%] border-b border-[#8c8c8c]">
    <div className="relative w-[42px] shrink-0 overflow-hidden border-r border-[#8c8c8c] bg-white">
      <button aria-label="데이터 표" className="absolute top-5 left-[5px] flex h-[14px] w-[14px] items-center justify-center border border-black bg-white">
        <svg width="10" height="10" stroke="#888" fill="none"><path d="M.5.5h9v9h-9zM.5 3.500h9M3.500.5v9M6.500.5v9" /></svg>
      </button>
      {LEFT_PRICES.map(([t, y]) => (
        <span key={t} style={top(y, 77, 797)} className="absolute right-0.5 -translate-y-1/2 leading-3">{t}</span>
      ))}
      <div style={top(222, 77, 797)} className="absolute right-1 left-[3px] bg-white text-xs leading-3 text-[#e81c10]">
        <div className="flex h-3 justify-end overflow-hidden bg-[#e81c10] pr-0.5 text-white">3,500</div>
        <div className="flex justify-end overflow-hidden pr-1">,50%</div>
      </div>
      <div style={top(570, 77, 797)} className="absolute right-1 left-px overflow-hidden border border-black bg-[#ffdd6e] text-xs leading-[13px]">
        <div>24,695</div>
        <div className="text-[#ff0000]">23,47%</div>
      </div>
    </div>

    <div className="relative min-w-0 flex-1 overflow-hidden bg-[#f8f8f8]">
      <span style={{ ...top(836, 77, 797), ...left(66) }} className="absolute -translate-y-1/2 text-xs leading-3 text-[#0000cc]">최저 19,800 (69,19%, 09:00)</span>
      <PricePlot />
      <div className="absolute top-px left-1 flex items-center gap-0.5">
        <span className="h-[5px] w-[5px] border border-[#777] bg-[#bbb]" />
        <span className="flex h-[14px] items-center border border-[#c0c0c0] bg-[#eeeeee] px-[3px] text-[13px] text-[#333]">아이씨티케이 매물대 수(13)</span>
      </div>
      <span style={{ ...top(123, 77, 797), ...left(650) }} className="absolute -translate-y-1/2 text-xs leading-3 text-[#ff0000]">최고 36,950 (-9,34%, 09:25)</span>
      {SUMMARY.map((s, i) => (
        <span key={i} style={top(s.y, 77, 797)} className={`absolute right-1 -translate-y-1/2 text-xs leading-3 whitespace-pre ${s.className}`}>{s.text}</span>
      ))}
      <div style={top(827, 77, 797)} className="absolute right-1 left-0 h-[7px] bg-[#00ff00]" />
    </div>

    <div className="relative w-[47px] shrink-0 overflow-hidden border-l border-[#8c8c8c] bg-white">
      <Ticks side="left" from={77} height={797} values={range(148, 840, 62.36)} minor={range(110, 870, 12.47)} />
      <div className="absolute top-0.5 left-px text-xs leading-3 whitespace-nowrap text-[#e81c10]">LC:69,19<br /><span className="text-[#1a5fcc]">HC:-9,34</span></div>
      {RIGHT_PRICES.map(([t, y]) => (
        <span key={t} style={top(y, 77, 797)} className="absolute left-[7px] -translate-y-1/2 text-[11px] leading-3">{t}</span>
      ))}
      <div style={top(222, 77, 797)} className="absolute right-0.5 left-1 overflow-hidden bg-white pb-px text-xs leading-3 text-[#e81c10]">
        <div className="bg-[#e81c10] pt-px pl-1 text-white">33,500</div>
        <div className="pl-1">67,50%</div>
      </div>
      <div style={top(570, 77, 797)} className="absolute right-0.5 left-1 overflow-hidden border border-black bg-[#ffdd6e] text-xs leading-[13px] whitespace-nowrap">
        <div>24,695</div>
        <div className="text-[#ff0000]">-23,47%</div>
      </div>
    </div>
  </div>
);

const ObvRow: React.FC = () => (
  <div className="flex min-h-0 flex-[163_1_0%]">
    <div className="relative w-[42px] shrink-0 overflow-hidden border-r border-[#8c8c8c] bg-white">
      <Ticks side="right" from={875} height={163} values={[897, 926, 955, 984, 1012]} minor={range(879, 1010, 5.8)} />
      {[['2,500K', 896], ['2,000K', 925], ['1,500K', 954], ['1,000K', 984], ['500,000', 1011]].map(([t, y]) => (
        <span key={t} style={top(Number(y), 875, 163)} className="absolute right-[7px] -translate-y-1/2 leading-3">{t}</span>
      ))}
    </div>
    <div className="relative min-w-0 flex-1 overflow-hidden bg-[#f8f8f8]">
      <ObvPlot />
      {OBV_SUMMARY.map((s, i) => (
        <span key={i} style={top(s.y, 875, 163)} className={`absolute right-1 -translate-y-1/2 text-xs leading-3 whitespace-pre ${s.className}`}>{s.text}</span>
      ))}
    </div>
    <div className="relative w-[47px] shrink-0 overflow-hidden border-l border-[#8c8c8c] bg-white">
      <Ticks side="left" from={875} height={163} values={[886, 911, 936, 961, 986, 1011, 1036]} minor={range(876, 1036, 5)} />
      {['600,000', '500,000', '400,000', '300,000', '200,000', '100,000'].map((t, i) => (
        <span key={t} style={top(885 + i * 25, 875, 163)} className="absolute left-[7px] -translate-y-1/2 text-[11px] leading-3">{t}</span>
      ))}
      <button aria-label="지표 닫기" className="absolute top-[3px] right-0.5 flex h-2 w-2 items-center justify-center bg-[#444] text-white"><X size={7} /></button>
    </div>
  </div>
);

const TimeRow: React.FC = () => (
  <div className="flex h-[19px] shrink-0 border-y border-[#8c8c8c] bg-white">
    <div className="w-[42px] shrink-0 border-r border-[#8c8c8c]" />
    <div className="relative min-w-0 flex-1">
      <span className="absolute top-0 left-0.5 text-xs leading-4 font-bold">05/17</span>
      {TIMES.map(([t, x]) => (
        <span key={x} style={left(x)} className="absolute top-0 h-full border-l border-[#8c8c8c] pl-px text-[11px] leading-4">{t}</span>
      ))}
      <span style={left(1542)} className="absolute -top-px flex h-[19px] w-[136px] items-center justify-center border border-black bg-[#ffdd6e] text-xs whitespace-nowrap">
        2024/05/17(금) 09:52:05
      </span>
    </div>
    <div className="w-[47px] shrink-0 overflow-hidden border-l border-[#8c8c8c] pl-[7px] text-[11px] leading-4 whitespace-nowrap">10:00:1</div>
  </div>
);

const PLAYERS: [string, string][] = [
  ['재생', 'M5 2l5 4-5 4z'],
  ['뒤로', 'M6 2v8L1 6zM11 2v8L6 6z'],
  ['정지', 'M2 2h8v8H2z'],
  ['앞으로', 'M1 2l5 4-5 4zM6 2l5 4-5 4z'],
];

const TOOLS: [string, string][] = [
  ['창 추가', 'M6 11.500H2q-1 0-1-1V2q0-1 1-1h8q1 0 1 1v4M6.500 6.500h7v7h-7zM10 6v7M6 10h7'],
  ['창 복사', 'M5 8.500H1.500V1.500h9V5M5.500 5.500h8v7h-8z'],
  ['영역 선택', 'M1 1.500h2M5 1.500h2M9 1.500h2M13 1.500h1M1 9l4-3 3 3 4-4M1 12.500h2M5 12.500h2M9 12.500h2M13.500 2v3M13.500 10v3M11 10l2 2M.5 5v2'],
  ['십자선', 'M0 3.500h14M3.500 0v14M6 6l5 5M6.500 11V6.500H11'],
  ['추세선', 'M1 2.500h13M0 11h3l3-6 4 5 3 1'],
  ['수직선', 'M4.500 0v14M0 12l4-2 4-5 3 5 3 1'],
  ['사선', 'M1 13L12 1M0 10h4l4-5 3 5 3 1'],
  ['지우개', 'M1 7l5-6h6L7 7zM1 7v4h6l5-6V1M7 7v4M9.500 9v5M11.500 8v6M13.500 8v6'],
  ['차트 겹치기', 'M4 4V.5h10v8h-2M.5 4.500h10v9H.5zM2 11l3-3 2 2 3-3'],
];

const BottomBar: React.FC = () => (
  <div className="flex h-[17px] shrink-0 items-center bg-[#ececec] text-[#555]">
    <button aria-label="왼쪽으로" className="flex h-4 w-4 items-center justify-center border border-[#999] bg-[#efefef]">
      <svg width="5" height="8"><path d="M5 0v8L0 4z" fill="#000" /></svg>
    </button>
    <div className="h-4 flex-1 border-r-2 border-b border-[#808080] bg-[#f0f0f0]" />
    <div className="flex">
      {PLAYERS.map(([name, d]) => (
        <button key={name} aria-label={name} className="flex h-4 w-[17px] items-center justify-center border-r-2 border-b border-[#808080] bg-[#f0f0f0]">
          <svg width="12" height="12"><path d={d} fill="#000" /></svg>
        </button>
      ))}
    </div>
    <div className="relative ml-[5px] h-4 w-[72px]">
      <input type="range" aria-label="재생 속도" defaultValue="100" className="absolute top-1 h-0.5 w-full appearance-none bg-[#999] [&::-webkit-slider-thumb]:h-2.5 [&::-webkit-slider-thumb]:w-[5px] [&::-webkit-slider-thumb]:appearance-none [&::-webkit-slider-thumb]:border [&::-webkit-slider-thumb]:border-[#777] [&::-webkit-slider-thumb]:bg-[#eee]" />
      <svg viewBox="0 0 72 3" className="absolute bottom-0 h-[3px] w-full" shapeRendering="crispEdges" aria-hidden="true">
        {range(3, 69, 6.6).map((x) => <rect key={x} x={x} y="0" width="1" height="3" fill="#000" />)}
      </svg>
    </div>
    <div className="ml-1 flex">
      {TOOLS.map(([name, d]) => (
        <button key={name} aria-label={name} className={name === '십자선' ? 'flex h-[17px] w-[17px] items-center justify-center border border-[#999] bg-white' : 'flex h-[17px] w-[17px] items-center justify-center'}>
          <svg width="15" height="14" fill="none" stroke="currentColor"><path d={d} /></svg>
        </button>
      ))}
      <button aria-label="확대경" className="flex w-[17px] items-center justify-center"><Search size={14} /></button>
      <button aria-label="축소" className="flex w-[17px] items-center justify-center"><Minus size={13} strokeWidth={3} /></button>
      <button aria-label="확대" className="flex w-[17px] items-center justify-center"><Plus size={14} strokeWidth={3} /></button>
      <button aria-label="자동" className="flex h-[17px] w-4 items-center justify-center border border-[#999] bg-white text-sm font-bold">A</button>
    </div>
  </div>
);

const App: React.FC = () => {
  return (
    <div className="flex h-screen w-full flex-col overflow-hidden bg-black pb-[3px] font-['Liberation_Sans','Noto_Sans_CJK_KR',sans-serif]">
      <TitleBar />
      <main className="mx-[3px] flex min-h-0 flex-1 flex-col bg-[#d0d0d0] text-black">
        <Toolbar />
        <QuoteBar />
        <section className="mt-[3px] flex min-h-0 flex-1 flex-col bg-[#ececec] px-[3px] pb-[3px]">
          <div className="relative flex min-h-0 flex-1 flex-col border-x border-t border-[#8c8c8c] text-[11px] text-[#444]">
            <div className="relative flex min-h-0 flex-1 flex-col">
              <PriceRow />
              <ObvRow />
              {/* crosshair */}
              <div className="pointer-events-none absolute inset-y-0 right-[47px] left-[42px]">
                <div style={left(1610)} className="absolute inset-y-0 w-px bg-[#ff0000]" />
                <div style={top(584, 77, 961)} className="absolute inset-x-0 h-px bg-[#ff0000]" />
              </div>
            </div>
            <TimeRow />
          </div>
          <BottomBar />
        </section>
      </main>
    </div>
  );
};

export default App;
